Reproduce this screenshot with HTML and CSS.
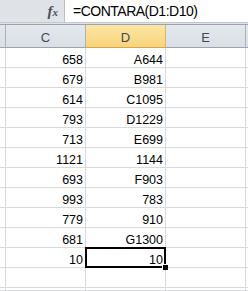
FILE: index.html
```html
<!DOCTYPE html>
<html>
<head>
    <title>Hoja de cálculo</title>
    <link rel="stylesheet" href="styles.css">
</head>
<body>
    <div class="formula-bar">
        <div class="name-area">
            <span class="fx"><i>f</i><span class="fx-x">x</span></span>
        </div>
        <div class="formula-input">=CONTARA(D1:D10)</div>
    </div>
    <div class="bar-gap"></div>

    <div class="sheet">
        <!-- column headers -->
        <div class="head"></div>
        <div class="head">C</div>
        <div class="head active">D</div>
        <div class="head">E</div>
        <div class="head last"></div>

        <div class="cell"></div><div class="cell num">658</div><div class="cell num">A644</div><div class="cell"></div><div class="cell last"></div>
        <div class="cell"></div><div class="cell num">679</div><div class="cell num">B981</div><div class="cell"></div><div class="cell last"></div>
        <div class="cell"></div><div class="cell num">614</div><div class="cell num">C1095</div><div class="cell"></div><div class="cell last"></div>
        <div class="cell"></div><div class="cell num">793</div><div class="cell num">D1229</div><div class="cell"></div><div class="cell last"></div>
        <div class="cell"></div><div class="cell num">713</div><div class="cell num">E699</div><div class="cell"></div><div class="cell last"></div>
        <div class="cell"></div><div class="cell num">1121</div><div class="cell num">1144</div><div class="cell"></div><div class="cell last"></div>
        <div class="cell"></div><div class="cell num">693</div><div class="cell num">F903</div><div class="cell"></div><div class="cell last"></div>
        <div class="cell"></div><div class="cell num">993</div><div class="cell num">783</div><div class="cell"></div><div class="cell last"></div>
        <div class="cell"></div><div class="cell num">779</div><div class="cell num">910</div><div class="cell"></div><div class="cell last"></div>
        <div class="cell"></div><div class="cell num">681</div><div class="cell num">G1300</div><div class="cell"></div><div class="cell last"></div>
        <div class="cell"></div><div class="cell num">10</div><div class="cell num selected">10<span class="sel-box"></span><span class="fill-handle"></span></div><div class="cell"></div><div class="cell last"></div>
        <div class="cell"></div><div class="cell"></div><div class="cell"></div><div class="cell"></div><div class="cell last"></div>
        <div class="cell"></div><div class="cell"></div><div class="cell"></div><div class="cell"></div><div class="cell last"></div>
    </div>
</body>
</html>
```

FILE: styles.css
```css
body {
    margin: 0;
    padding: 0;
    width: 248px;
    height: 291px;
    overflow: hidden;
    background: #ffffff;
    font-family: "Liberation Sans", Arial, sans-serif;
}

.formula-bar {
    display: flex;
    height: 23px;
    box-sizing: border-box;
    border-bottom: 1px solid #c2c8d0;
    background: #dfe3e8;
}

.name-area {
    width: 65px;
    box-sizing: border-box;
    border-right: 1px solid #b9c0c9;
    display: flex;
    justify-content: flex-end;
    align-items: center;
    padding-right: 6px;
}

.fx {
    font-family: "Liberation Serif", "Times New Roman", serif;
    font-weight: bold;
    color: #4a4f57;
    font-size: 15px;
    line-height: 15px;
    padding-top: 1px;
}

.fx-x {
    font-style: italic;
    font-size: 11px;
}

.formula-input {
    flex: 1;
    background: #ffffff;
    color: #000000;
    font-size: 14px;
    letter-spacing: -0.5px;
    line-height: 22px;
    padding-left: 8px;
}

.bar-gap {
    height: 2px;
    box-sizing: border-box;
    background: #dfe3e8;
    border-bottom: 1px solid #9aa3ae;
}

.sheet {
    display: grid;
    grid-template-columns: 6px 80px 80px 80px 1fr;
    grid-template-rows: 23px repeat(12, 20px) 3px;
}

.head {
    box-sizing: border-box;
    background: linear-gradient(#e4e8ed, #dadfe5);
    border-right: 1px solid #a9b1bb;
    border-bottom: 1px solid #99a2ad;
    color: #3f4956;
    font-size: 13px;
    text-align: center;
    line-height: 18px;
    padding-top: 4px;
}

.head.active {
    background: linear-gradient(#fbe6a6, #f8d47a);
    border-right-color: #e0b864;
    border-bottom-color: #d5a552;
}

.head.last,
.cell.last {
    border-right: none;
}

.cell {
    box-sizing: border-box;
    border-right: 1px solid #d9dadb;
    border-bottom: 1px solid #d9dadb;
    font-size: 12.5px;
    line-height: 14px;
    color: #000000;
}

.num {
    display: flex;
    justify-content: flex-end;
    align-items: flex-end;
    padding-right: 2px;
}

.selected {
    position: relative;
}

.sel-box {
    position: absolute;
    left: -1px;
    top: -1px;
    right: -1px;
    bottom: -1px;
    border: 2px solid #000000;
}

.fill-handle {
    position: absolute;
    right: -3px;
    bottom: -3px;
    width: 5px;
    height: 5px;
    background: #000000;
    border-left: 1px solid #ffffff;
    border-top: 1px solid #ffffff;
}
```
